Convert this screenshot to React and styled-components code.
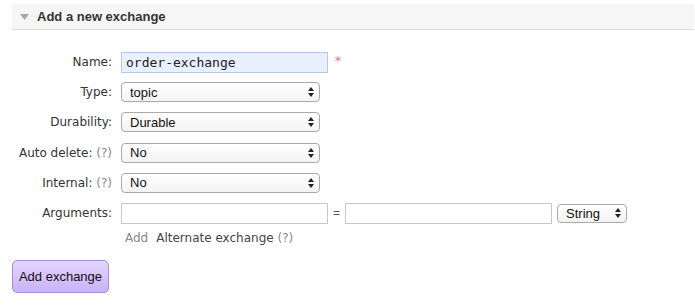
import styled, { createGlobalStyle } from "styled-components";

const GlobalStyle = createGlobalStyle`
  body {
    margin: 0;
    background: #ffffff;
    font-family: "DejaVu Sans", Verdana, sans-serif;
    font-size: 12px;
    color: #333;
  }
`;

const Section = styled.div`
  padding: 4px 1px 0 12px;
`;

const Header = styled.div`
  display: flex;
  align-items: center;
  gap: 8px;
  height: 25px;
  padding-left: 8px;
  background: #f6f6f6;
  border-bottom: 1px solid #dcdcdc;
`;

const HeaderTitle = styled.h2`
  margin: 0;
  font-family: "Liberation Sans", Arial, sans-serif;
  font-size: 13px;
  font-weight: bold;
  color: #333;
`;

const Form = styled.div`
  display: grid;
  grid-template-columns: 100px auto;
  grid-template-rows: repeat(6, 30.2px) 20px;
  column-gap: 9px;
  align-items: center;
  margin-top: 17px;
`;

const Label = styled.label`
  text-align: right;
  color: #333;
  white-space: nowrap;
`;

const Help = styled.span`
  color: #888;
`;

const Field = styled.div`
  display: flex;
  align-items: center;
  gap: ${(p) => p.$gap || 9}px;
`;

const TextInput = styled.input`
  box-sizing: border-box;
  width: ${(p) => p.$width}px;
  height: 21px;
  padding: 0 4px;
  border: 1px solid ${(p) => (p.$filled ? "#b9c7e6" : "#c8c8c8")};
  background: ${(p) => (p.$filled ? "#e8effd" : "#fff")};
  font-family: "DejaVu Sans Mono", monospace;
  font-size: 13px;
  color: #222;
  outline: none;
`;

const Required = styled.span`
  color: #f06a8a;
  font-size: 12px;
  margin-left: 1px;
  margin-top: -2px;
`;

const SelectWrap = styled.div`
  position: relative;
  width: ${(p) => p.$width}px;
  height: ${(p) => p.$height || 20}px;
`;

const Select = styled.select`
  appearance: none;
  box-sizing: border-box;
  width: 100%;
  height: 100%;
  padding: 0 18px 0 8px;
  border: 1px solid #a9a9a9;
  border-radius: 4px;
  background: linear-gradient(#ffffff, #f3f3f3);
  font-family: "Liberation Sans", Arial, sans-serif;
  font-size: 13px;
  color: #111;
  outline: none;
`;

const Arrows = styled.svg`
  position: absolute;
  right: 6px;
  top: 50%;
  margin-top: -5px;
  pointer-events: none;
`;

const Equals = styled.span`
  font-family: "Liberation Sans", Arial, sans-serif;
  font-size: 12px;
  color: #555;
`;

const Links = styled.div`
  display: flex;
  gap: 8px;
  padding-left: 4px;
  color: #444;
`;

const Muted = styled.span`
  color: #888;
`;

const Button = styled.button`
  margin-top: 12px;
  width: 97px;
  height: 33px;
  border: 1px solid #a58fd8;
  border-radius: 5px;
  background: linear-gradient(#e3d5ff, #c9b2f8);
  font-family: "Liberation Sans", Arial, sans-serif;
  font-size: 13px;
  color: #111;
  padding: 0;
`;

function Triangle() {
  return (
    <svg width="9" height="6" viewBox="0 0 9 6">
      <path d="M0 0 H9 L4.5 6 Z" fill="#a8a8a8" />
    </svg>
  );
}

function SelectBox({ width, height, value }) {
  return (
    <SelectWrap $width={width} $height={height}>
      <Select defaultValue={value}>
        <option>{value}</option>
      </Select>
      <Arrows width="6" height="10" viewBox="0 0 6 10">
        <path d="M3 0 L6 4 H0 Z M0 6 H6 L3 10 Z" fill="#222" />
      </Arrows>
    </SelectWrap>
  );
}

export default function App() {
  return (
    <>
      <GlobalStyle />
      <Section>
        <Header>
          <Triangle />
          <HeaderTitle>Add a new exchange</HeaderTitle>
        </Header>
        <Form>
          <Label>Name:</Label>
          <Field $gap={6}>
            <TextInput $width={207} $filled defaultValue="order-exchange" />
            <Required>*</Required>
          </Field>

          <Label>Type:</Label>
          <Field>
            <SelectBox width={199} value="topic" />
          </Field>

          <Label>Durability:</Label>
          <Field>
            <SelectBox width={199} value="Durable" />
          </Field>

          <Label>
            Auto delete: <Help>(?)</Help>
          </Label>
          <Field>
            <SelectBox width={199} value="No" />
          </Field>

          <Label>
            Internal: <Help>(?)</Help>
          </Label>
          <Field>
            <SelectBox width={199} value="No" />
          </Field>

          <Label>Arguments:</Label>
          <Field $gap={5}>
            <TextInput $width={207} />
            <Equals>=</Equals>
            <TextInput $width={207} />
            <SelectBox width={70} height={19} value="String" />
          </Field>

          <span />
          <Links>
            <Muted>Add</Muted>
            <span>
              Alternate exchange <Help>(?)</Help>
            </span>
          </Links>
        </Form>
        <Button>Add exchange</Button>
      </Section>
    </>
  );
}
